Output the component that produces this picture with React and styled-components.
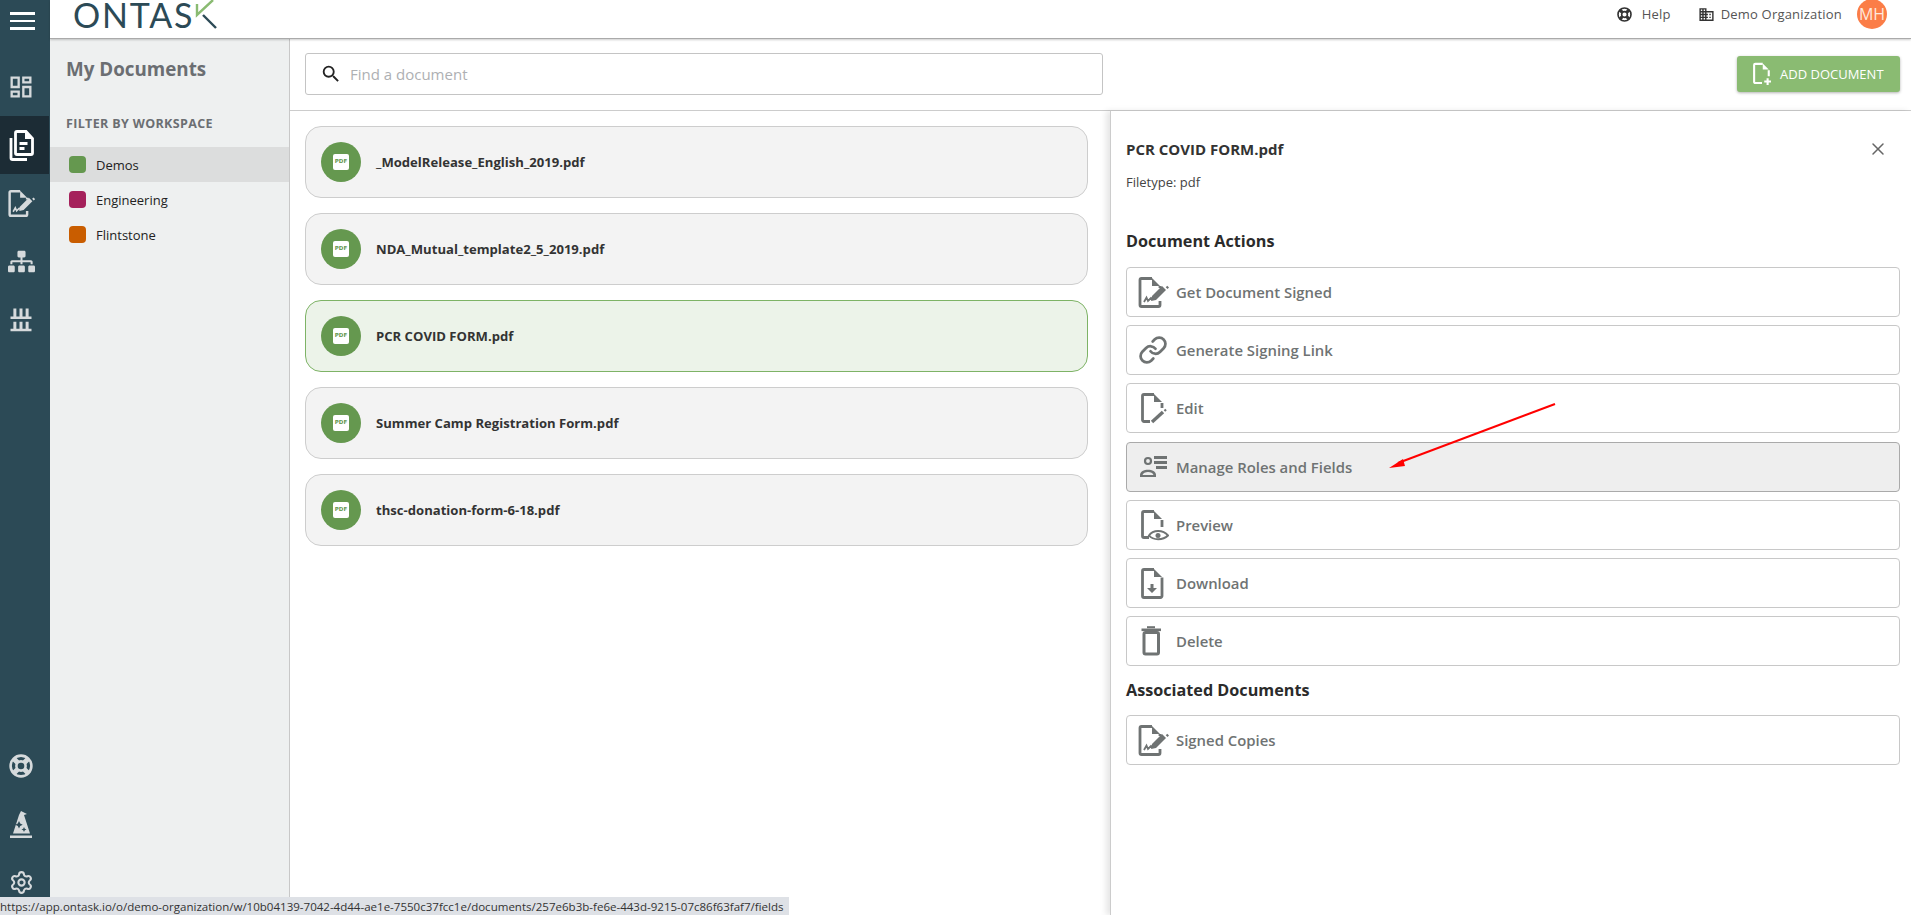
import React from 'react';
import styled, { createGlobalStyle } from 'styled-components';
import { MdOutlineDashboard, MdDomain, MdSearch } from 'react-icons/md';
import { FaSitemap } from 'react-icons/fa';
import { Settings, X, Link } from 'lucide-react';

const GlobalStyle = createGlobalStyle`
  html, body {
    margin: 0;
    height: 100%;
    overflow: hidden;
    background: #fff;
    font-family: 'Open Sans', 'Liberation Sans', sans-serif;
  }
`;

const Page = styled.div`
  position: relative;
  display: flex;
  width: 100%;
  height: 100vh;
  overflow: hidden;
`;

const Rail = styled.nav`
  flex: 0 0 50px;
  display: flex;
  flex-direction: column;
  background: #2c4a56;
  color: #d6dadc;
`;

const Burger = styled.div`
  width: 45px;
  height: 58px;
  display: flex;
  flex-direction: column;
  gap: 5px;
  align-items: center;
  padding-top: 12px;
  box-sizing: border-box;
  span {
    display: block;
    width: 25px;
    height: 2.5px;
    background: #fff;
  }
`;

const RailItem = styled.div`
  width: 49px;
  height: 58px;
  box-sizing: border-box;
  padding-right: 7px;
  display: flex;
  align-items: center;
  justify-content: center;
  background: ${({ $active }) => ($active ? '#1c2c35' : 'transparent')};
  color: ${({ $active }) => ($active ? '#fff' : '#d6dadc')};
`;

const RailBottom = styled.div`
  margin-top: auto;
  padding-bottom: 4px;
`;

const Body = styled.div`
  flex: 1;
  min-width: 0;
  display: flex;
  flex-direction: column;
`;

const Header = styled.header`
  height: 39px;
  flex: none;
  box-sizing: border-box;
  display: flex;
  align-items: flex-start;
  border-bottom: 1px solid #aaa;
  box-shadow: 0 1px 2px rgba(0, 0, 0, 0.2);
  position: relative;
  z-index: 2;
  background: #fff;
`;

const Logo = styled.div`
  display: flex;
  align-items: flex-start;
  margin-left: 23px;
`;

const LogoText = styled.span`
  font-family: Lato, 'Open Sans', sans-serif;
  font-size: 34px;
  line-height: 30px;
  letter-spacing: 1.8px;
  color: #2c4a56;
`;

const HeaderRight = styled.div`
  margin-left: auto;
  display: flex;
  align-items: center;
  height: 28px;
  font-size: 13px;
  letter-spacing: 0.2px;
  color: #555;
`;

const HeaderLink = styled.div`
  display: flex;
  align-items: center;
  gap: ${({ $gap }) => $gap}px;
  margin-right: ${({ $right }) => $right}px;
  svg {
    color: #333;
  }
`;

const Avatar = styled.div`
  width: 30px;
  height: 30px;
  margin: -1px 24px 0 0;
  border-radius: 50%;
  background: #fb7d47;
  color: #ffe8dc;
  display: flex;
  align-items: center;
  justify-content: center;
  font-size: 16px;
  letter-spacing: 0;
`;

const Columns = styled.div`
  flex: 1;
  min-height: 0;
  display: flex;
`;

const Sidebar = styled.aside`
  flex: 0 0 239px;
  background: #eef0f0;
  border-right: 1px solid #c8c8c8;
`;

const SidebarTitle = styled.h1`
  margin: 0;
  padding: 16px 0 0 16px;
  font-size: 18.8px;
  line-height: 29px;
  font-weight: 700;
  color: #6b6e72;
`;

const FilterLabel = styled.div`
  margin: 31px 0 14px 16px;
  font-size: 12.5px;
  line-height: 18px;
  font-weight: 700;
  letter-spacing: 0.35px;
  color: #6b6e72;
`;

const Workspace = styled.div`
  height: 35px;
  display: flex;
  align-items: center;
  gap: 10px;
  padding-left: 19px;
  font-size: 13px;
  color: #222;
  background: ${({ $active }) => ($active ? '#dcdddd' : 'transparent')};
`;

const Swatch = styled.span`
  width: 17px;
  height: 17px;
  border-radius: 4px;
  background: ${({ $color }) => $color};
`;

const Content = styled.div`
  flex: 1;
  min-width: 0;
  display: flex;
  flex-direction: column;
`;

const Toolbar = styled.div`
  height: 72px;
  flex: none;
  box-sizing: border-box;
  display: flex;
  justify-content: space-between;
  padding: 14px 11px 0 15px;
  border-bottom: 1px solid #ccc;
`;

const Search = styled.div`
  width: 798px;
  height: 42px;
  box-sizing: border-box;
  display: flex;
  align-items: center;
  gap: 8px;
  padding-left: 14px;
  border: 1px solid #c4c4c4;
  border-radius: 3px;
  font-size: 15px;
  color: #aeb0b3;
  svg {
    color: #222;
  }
`;

const AddButton = styled.button`
  width: 163px;
  height: 36px;
  margin-top: 3px;
  display: flex;
  align-items: center;
  gap: 6px;
  padding: 0 0 0 13px;
  border: none;
  border-radius: 3px;
  background: #8abb72;
  color: #fff;
  font-family: inherit;
  font-size: 13px;
  box-shadow: 0 1px 3px rgba(0, 0, 0, 0.3);
`;

const Split = styled.div`
  flex: 1;
  min-height: 0;
  display: flex;
`;

const DocList = styled.div`
  flex: 0 0 820px;
  box-sizing: border-box;
  padding: 15px 22px 0 15px;
  display: flex;
  flex-direction: column;
  gap: 15px;
`;

const DocCard = styled.div`
  height: 72px;
  box-sizing: border-box;
  display: flex;
  align-items: center;
  gap: 15px;
  padding-left: 15px;
  border-radius: 16px;
  border: 1px solid ${({ $selected }) => ($selected ? '#7eb366' : '#cdcdcd')};
  background: ${({ $selected }) => ($selected ? '#ecf3e9' : '#f3f3f3')};
  font-size: 13.1px;
  font-weight: 700;
  color: #333;
`;

const PdfBadge = styled.div`
  width: 40px;
  height: 40px;
  border-radius: 50%;
  background: #65984f;
  display: flex;
  align-items: center;
  justify-content: center;
  span {
    width: 16px;
    height: 16px;
    border-radius: 2px;
    background: #fff;
    color: #65984f;
    font-family: 'DejaVu Sans', sans-serif;
    font-size: 5.5px;
    font-weight: 700;
    line-height: 15px;
    text-align: center;
  }
`;

const Panel = styled.section`
  flex: 1;
  min-width: 0;
  box-sizing: border-box;
  padding: 27px 11px 0 15px;
  border-left: 1px solid #ccc;
  box-shadow: -4px 0 6px rgba(0, 0, 0, 0.1);
`;

const PanelTop = styled.div`
  display: flex;
  justify-content: space-between;
  align-items: center;
  padding-right: 12px;
  svg {
    color: #666;
  }
`;

const PanelTitle = styled.h2`
  margin: 0;
  font-size: 15px;
  line-height: 22px;
  font-weight: 700;
  color: #333;
`;

const Filetype = styled.div`
  margin-top: 13px;
  font-size: 13px;
  line-height: 18px;
  color: #444;
`;

const SectionTitle = styled.h3`
  margin: ${({ $top }) => $top}px 0 ${({ $bottom }) => $bottom}px;
  font-size: 16.2px;
  line-height: 24px;
  font-weight: 700;
  color: #2b2b2b;
`;

const Actions = styled.div`
  display: flex;
  flex-direction: column;
  gap: 8.2px;
`;

const ActionButton = styled.div`
  height: 50px;
  box-sizing: border-box;
  display: flex;
  align-items: center;
  gap: 7px;
  padding-left: 10px;
  border-radius: 4px;
  border: 1px solid ${({ $hover }) => ($hover ? '#aaa' : '#c8c8c8')};
  background: ${({ $hover }) => ($hover ? '#eeeeee' : '#fff')};
  font-size: 14.9px;
  font-weight: 600;
  color: #6f7373;
`;

const LinkIcon = styled(Link)`
  margin: 0 1px;
`;

const StatusBar = styled.div`
  position: absolute;
  left: 0;
  bottom: 0;
  width: 789px;
  height: 16px;
  padding-top: 2px;
  background: #dee1e6;
  color: #333;
  font-size: 11.54px;
  line-height: 16px;
  white-space: nowrap;
`;

const ArrowLayer = styled.svg`
  position: absolute;
  left: 1380px;
  top: 395px;
  z-index: 3;
`;

const Doc = ({ size = 32, children }) => (
  <svg width={size} height={size} viewBox="0 0 32 32" fill="none" stroke="currentColor" strokeWidth="2.8">
    {children}
  </svg>
);

const FOLD = 'M17 2l8 8h-8z';

const SignIcon = ({ size }) => (
  <Doc size={size}>
    <path d="M15 2.500H4.500A1.500 1.500 0 0 0 3 4v25a1.500 1.500 0 0 0 1.500 1.500H21.500A1.500 1.500 0 0 0 23 29v-4M23 12v-2" />
    <path d="M15 2l8 8h-8z" fill="currentColor" stroke="none" />
    <path d="M7 26l2.500-4.500 1.500 3.500 3-3 2 1.500" strokeWidth="1.8" />
    <path d="M14 25l1-5 10-10 4 4-10 10z" fill="currentColor" stroke="none" />
    <path d="M29.500 10.500l1.800 1.800" strokeWidth="2.200" />
  </Doc>
);

const EditIcon = () => (
  <Doc>
    <path d="M13 29.500H7A1.500 1.500 0 0 1 5.500 28V4A1.500 1.500 0 0 1 7 2.500h10M25 11v5" />
    <path d={FOLD} fill="currentColor" stroke="none" />
    <path d="M15 30L26 20" strokeWidth="3.4" />
    <path d="M27.500 17.500l1.500 1.500" strokeWidth="2.2" />
  </Doc>
);

const PreviewIcon = () => (
  <Doc>
    <path d="M12 28.500H7A1.500 1.500 0 0 1 5.500 27V4A1.500 1.500 0 0 1 7 2.500h10M25 11v7" />
    <path d={FOLD} fill="currentColor" stroke="none" />
    <path d="M12 26.500c4-6 14-6 19 0-5 5-15 5-19 0z" fill="#fff" strokeWidth="2" />
    <circle cx="21" cy="26.500" r="2.500" fill="currentColor" stroke="none" />
  </Doc>
);

const DownloadIcon = () => (
  <Doc>
    <path d="M17 2.500H7A1.500 1.500 0 0 0 5.500 4v25A1.500 1.500 0 0 0 7 30.500h16.500A1.500 1.500 0 0 0 25 29V10.500" />
    <path d={FOLD} fill="currentColor" stroke="none" />
    <path d="M13.500 17h3v4h3.500l-5 5-5-5h3.500z" fill="currentColor" stroke="none" />
  </Doc>
);

const TrashIcon = () => (
  <Doc>
    <rect x="7" y="7.500" width="14.500" height="21.500" rx="1.500" strokeWidth="3" />
    <path d="M4.500 4.800h19.500" strokeWidth="2.6" />
    <path d="M10 2.200h8" strokeWidth="2" />
  </Doc>
);

const RolesIcon = () => (
  <Doc>
    <circle cx="11" cy="10" r="3" strokeWidth="2.2" />
    <path d="M3 26v-2c0-7 16-7 16 0v2z" fill="currentColor" stroke="none" />
    <path d="M5.500 24c1-4 10-4 11 0z" fill="#eee" stroke="none" />
    <path d="M17 6.500h13M17 11.500h13M19 16.500h11" strokeWidth="2.8" />
  </Doc>
);

const DocumentsIcon = () => (
  <Doc>
    <path d="M12 2.500h9l6.500 7V24a1.500 1.500 0 0 1-1.500 1.500H12A1.500 1.500 0 0 1 10.500 24V4A1.500 1.500 0 0 1 12 2.500z" />
    <path d="M6 9v20a1.500 1.500 0 0 0 1.500 1.500H22" />
    <path d="M20 2v8h8z" fill="currentColor" stroke="none" />
    <path d="M14.500 14.500h8M14.500 19.500h5" />
  </Doc>
);

const AddDocIcon = () => (
  <Doc size={24}>
    <path d="M16 28H7a1.500 1.500 0 0 1-1.500-1.500V4A1.500 1.500 0 0 1 7 2.500h10M25 11v8" />
    <path d={FOLD} fill="currentColor" stroke="none" />
    <path d="M19 26h9M23.500 21.500v9" />
  </Doc>
);

const PillarsIcon = () => (
  <Doc size={28}>
    <path d="M9 4v11M16 4v11M23 4v11M9 19v10M16 19v10M23 19v10" strokeWidth="3.4" />
    <path d="M4 14.500h24M4 28.500h24" strokeWidth="2.8" />
  </Doc>
);

const LifeRingIcon = ({ size }) => (
  <svg width={size} height={size} viewBox="0 0 24 24" fill="none" stroke="currentColor" strokeWidth="2.6">
    <circle cx="12" cy="12" r="10.400" />
    <circle cx="12" cy="12" r="4.600" />
    <path d="M4.500 4.500l4 4M19.500 4.500l-4 4M4.500 19.500l4-4M19.500 19.500l-4-4" strokeWidth="5" />
  </svg>
);

const WizardIcon = () => (
  <svg width="32" height="32" viewBox="0 0 32 32" fill="currentColor">
    <path d="M8 25.500L14 7l2-4 6 3-3 1 6 18.500z" />
    <rect x="5" y="27.500" width="22" height="2.500" />
    <path d="M14 13l1.200 2.500 2.500 1.200-2.500 1.200-1.200 2.500-1.200-2.500-2.500-1.200 2.500-1.200zM19 19l.8 1.700 1.700.8-1.700.8-.8 1.700-.8-1.700-1.700-.8 1.700-.8z" fill="#2c4a56" />
  </svg>
);

const LogoK = () => (
  <svg width="24" height="30" viewBox="0 0 24 30" fill="none">
    <path d="M3 4v11l16-15" stroke="#8abb72" strokeWidth="2.4" />
    <path d="M9 15l13 13" stroke="#2c4a56" strokeWidth="2.4" />
  </svg>
);

const Arrow = () => (
  <ArrowLayer width="180" height="80" viewBox="0 0 180 80">
    <path d="M175 9L18 68" stroke="#f00" strokeWidth="2" />
    <path d="M9 73l14-9 2 7z" fill="#f00" />
  </ArrowLayer>
);

const DOCUMENTS = [
  '_ModelRelease_English_2019.pdf',
  'NDA_Mutual_template2_5_2019.pdf',
  'PCR COVID FORM.pdf',
  'Summer Camp Registration Form.pdf',
  'thsc-donation-form-6-18.pdf',
];

const WORKSPACES = [
  { name: 'Demos', color: '#65984f' },
  { name: 'Engineering', color: '#a5215b' },
  { name: 'Flintstone', color: '#c95d00' },
];

const ACTIONS = [
  { label: 'Get Document Signed', icon: <SignIcon /> },
  { label: 'Generate Signing Link', icon: <LinkIcon size={30} strokeWidth={2.2} /> },
  { label: 'Edit', icon: <EditIcon /> },
  { label: 'Manage Roles and Fields', icon: <RolesIcon />, hover: true },
  { label: 'Preview', icon: <PreviewIcon /> },
  { label: 'Download', icon: <DownloadIcon /> },
  { label: 'Delete', icon: <TrashIcon /> },
];

const App = () => (
  <Page>
    <GlobalStyle />
    <Rail>
      <Burger>
        <span />
        <span />
        <span />
      </Burger>
      <RailItem><MdOutlineDashboard size={28} /></RailItem>
      <RailItem $active><DocumentsIcon /></RailItem>
      <RailItem><SignIcon size={28} /></RailItem>
      <RailItem><FaSitemap size={27} /></RailItem>
      <RailItem><PillarsIcon /></RailItem>
      <RailBottom>
        <RailItem><LifeRingIcon size={24} /></RailItem>
        <RailItem><WizardIcon /></RailItem>
        <RailItem><Settings size={25} strokeWidth={2} /></RailItem>
      </RailBottom>
    </Rail>
    <Body>
      <Header>
        <Logo>
          <LogoText>ONTAS</LogoText>
          <LogoK />
        </Logo>
        <HeaderRight>
          <HeaderLink $gap={10} $right={27}><LifeRingIcon size={15} />Help</HeaderLink>
          <HeaderLink $gap={6} $right={15}><MdDomain size={17} />Demo Organization</HeaderLink>
          <Avatar>MH</Avatar>
        </HeaderRight>
      </Header>
      <Columns>
        <Sidebar>
          <SidebarTitle>My Documents</SidebarTitle>
          <FilterLabel>FILTER BY WORKSPACE</FilterLabel>
          {WORKSPACES.map((ws, i) => (
            <Workspace key={ws.name} $active={i === 0}>
              <Swatch $color={ws.color} />
              {ws.name}
            </Workspace>
          ))}
        </Sidebar>
        <Content>
          <Toolbar>
            <Search>
              <MdSearch size={22} />
              Find a document
            </Search>
            <AddButton><AddDocIcon />ADD DOCUMENT</AddButton>
          </Toolbar>
          <Split>
            <DocList>
              {DOCUMENTS.map((name) => (
                <DocCard key={name} $selected={name === 'PCR COVID FORM.pdf'}>
                  <PdfBadge><span>PDF</span></PdfBadge>
                  {name}
                </DocCard>
              ))}
            </DocList>
            <Panel>
              <PanelTop>
                <PanelTitle>PCR COVID FORM.pdf</PanelTitle>
                <X size={20} strokeWidth={1.8} />
              </PanelTop>
              <Filetype>Filetype: pdf</Filetype>
              <SectionTitle $top={38} $bottom={14}>Document Actions</SectionTitle>
              <Actions>
                {ACTIONS.map((action) => (
                  <ActionButton key={action.label} $hover={action.hover}>
                    {action.icon}
                    {action.label}
                  </ActionButton>
                ))}
              </Actions>
              <SectionTitle $top={12} $bottom={13}>Associated Documents</SectionTitle>
              <ActionButton><SignIcon />Signed Copies</ActionButton>
            </Panel>
          </Split>
        </Content>
      </Columns>
    </Body>
    <Arrow />
    <StatusBar>https://app.ontask.io/o/demo-organization/w/10b04139-7042-4d44-ae1e-7550c37fcc1e/documents/257e6b3b-fe6e-443d-9215-07c86f63faf7/fields</StatusBar>
  </Page>
);

export default App;
